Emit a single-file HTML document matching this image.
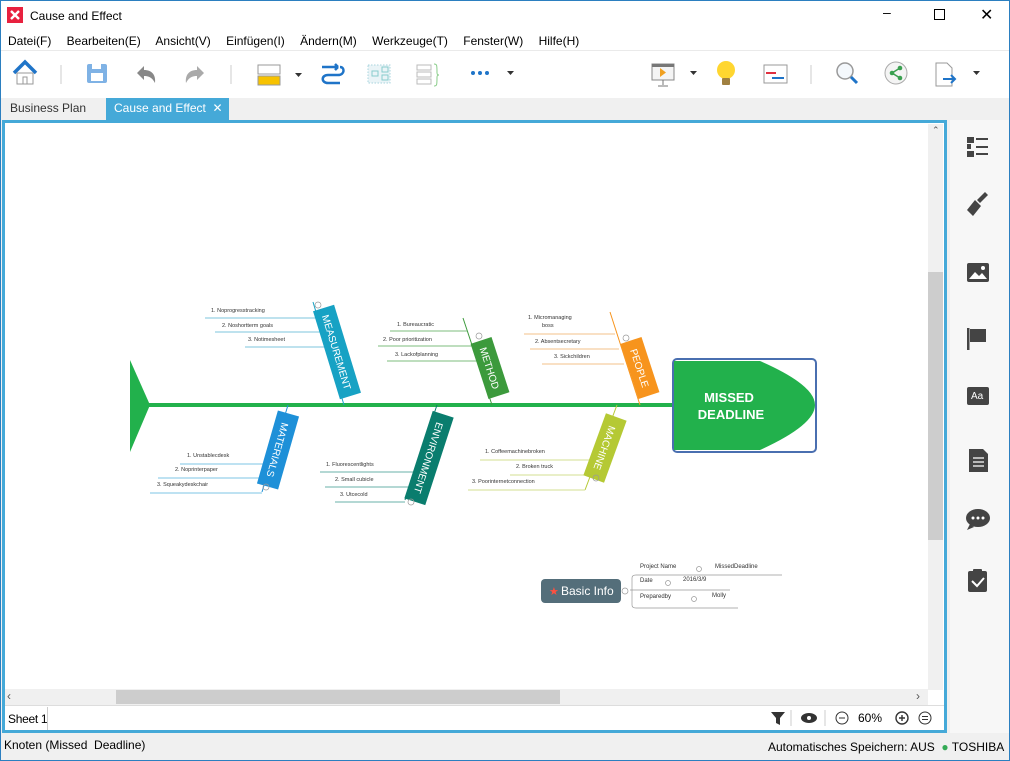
<!DOCTYPE html>
<html><head><meta charset="utf-8"><style>
*{margin:0;padding:0;box-sizing:border-box}
body{width:1010px;height:761px;overflow:hidden;background:#f0f0f0;font-family:"Liberation Sans",sans-serif;font-size:12px;color:#000;position:relative}
.a{position:absolute}
</style></head><body>
<div class="a" style="left:0;top:0;width:1010px;height:761px;border:1px solid #2b7fc0;pointer-events:none;z-index:9"></div>
<div class="a" style="left:0;top:0;width:1010px;height:32px;background:#fff"></div>
<svg class="a" style="left:7px;top:7px" width="16" height="16"><rect width="16" height="16" fill="#e8213f"/><path d="M4 4L12 12M12 4L4 12" stroke="#fff" stroke-width="2.4"/></svg>
<div class="a" style="left:30px;top:9px;font-size:12px">Cause and Effect</div>
<div class="a" style="left:883px;top:4px;font-size:14px">&#8211;</div>
<div class="a" style="left:934px;top:9px;width:11px;height:11px;border:1px solid #000"></div>
<div class="a" style="left:980px;top:5px;font-size:16px">&#10005;</div>
<div class="a" style="left:0;top:32px;width:1010px;height:18px;background:#fff"></div>
<div class="a" style="left:8px;top:34px;white-space:pre;word-spacing:0.5px">Datei(F)    Bearbeiten(E)    Ansicht(V)    Einfügen(I)    Ändern(M)    Werkzeuge(T)    Fenster(W)    Hilfe(H)</div>
<div class="a" style="left:0;top:50px;width:1010px;height:48px;background:#fff;border-top:1px solid #eaeaea"></div>
<svg class="a" style="left:0;top:55px" width="1010" height="40">
<path d="M14 18L25 7L36 18" stroke="#1f74c8" stroke-width="3.5" fill="none"/><rect x="17" y="18" width="16" height="11" fill="none" stroke="#999"/><rect x="23" y="22" width="4" height="7" fill="none" stroke="#999"/>
<line x1="61" y1="10" x2="61" y2="29" stroke="#ccc"/>
<rect x="87" y="9" width="20" height="19" rx="2" fill="#7fb2e5"/><rect x="91" y="18" width="12" height="8" fill="#fff"/><rect x="92" y="9" width="9" height="5" fill="#fff"/>
<path d="M137 18L144 11V15C152 15 156 20 155 28C152 22 148 21 144 21V25Z" fill="#888"/>
<path d="M204 18L197 11V15C189 15 185 20 186 28C189 22 193 21 197 21V25Z" fill="#aaa"/>
<line x1="231" y1="10" x2="231" y2="29" stroke="#ccc"/>
<rect x="258" y="10" width="22" height="9" fill="#fff" stroke="#999"/><rect x="258" y="21" width="22" height="9" fill="#f7c200" stroke="#999"/>
<path d="M295 18h7l-3.5 4z" fill="#333"/>
<path d="M322 12H338M338 12l-3-3M338 12l-3 3M340 12C345 12 345 20 338 20H328C321 20 321 28 328 28H340" stroke="#1f74c8" stroke-width="2.5" fill="none"/>
<rect x="368" y="10" width="22" height="18" fill="#eaf4f7" stroke="#a8d4de" stroke-dasharray="1.5"/><rect x="372" y="16" width="6" height="5" fill="none" stroke="#8cc"/><rect x="382" y="12" width="6" height="5" fill="none" stroke="#8cc"/><rect x="382" y="20" width="6" height="5" fill="none" stroke="#8cc"/>
<rect x="417" y="10" width="14" height="5" fill="none" stroke="#bbb"/><rect x="417" y="17" width="14" height="5" fill="none" stroke="#bbb"/><rect x="417" y="24" width="14" height="5" fill="none" stroke="#bbb"/><path d="M434 9c3 0 3 1 3 9 0 2 2 2 2 2 0 0-2 0-2 2 0 8 0 9-3 9" stroke="#8c8" fill="none"/>
<circle cx="473" cy="18" r="2" fill="#1f74c8"/><circle cx="480" cy="18" r="2" fill="#1f74c8"/><circle cx="487" cy="18" r="2" fill="#1f74c8"/>
<path d="M507 16h7l-3.5 4z" fill="#333"/>
<rect x="652" y="9" width="22" height="16" fill="#f4f4f4" stroke="#888"/><rect x="652" y="9" width="22" height="3" fill="#777"/><path d="M660 13l6 4.5-6 4.5z" fill="#f0a020"/><path d="M663 25v5M658 31h10" stroke="#777"/>
<path d="M690 16h7l-3.5 4z" fill="#333"/>
<circle cx="726" cy="15" r="9" fill="#ffd630"/><rect x="722" y="23" width="8" height="7" rx="1" fill="#a08040"/>
<rect x="764" y="10" width="23" height="18" fill="#fff" stroke="#999"/><path d="M766 18h10" stroke="#e03040" stroke-width="2"/><path d="M772 23h12" stroke="#1f74c8" stroke-width="2"/>
<line x1="811" y1="10" x2="811" y2="29" stroke="#ccc"/>
<circle cx="845" cy="16" r="8" fill="#f4f8fc" stroke="#999" stroke-width="1.5"/><path d="M851 22l6 6" stroke="#1f74c8" stroke-width="3"/>
<circle cx="896" cy="18" r="11" fill="#f4f4f4" stroke="#aaa"/><circle cx="900" cy="13" r="2.3" fill="#3aa050"/><circle cx="892" cy="18" r="2.3" fill="#3aa050"/><circle cx="900" cy="23" r="2.3" fill="#3aa050"/><path d="M900 13L892 18L900 23" stroke="#3aa050" stroke-width="1.5" fill="none"/>
<path d="M936 8h11l5 5v18h-16z" fill="#fff" stroke="#999"/><path d="M943 24h12M951 20l4 4-4 4" stroke="#1f74c8" stroke-width="2" fill="none"/>
<path d="M973 16h7l-3.5 4z" fill="#333"/>
</svg>
<div class="a" style="left:10px;top:101px;font-size:12px;color:#333">Business Plan</div>
<div class="a" style="left:106px;top:98px;width:123px;height:22px;background:#45a9d8;color:#fff;padding:3px 0 0 8px">Cause and Effect &nbsp;&#10005;</div>
<div class="a" style="left:950px;top:120px;width:60px;height:613px;background:#f7f7f7"></div>
<div class="a" style="left:2px;top:120px;width:945px;height:613px;border:3px solid #45a9d8;background:#fff"></div>
<div class="a" style="left:928px;top:124px;width:15px;height:566px;background:#f0f0f0"></div>
<div class="a" style="left:928px;top:272px;width:15px;height:268px;background:#cdcdcd"></div>
<div class="a" style="left:932px;top:125px;font-size:9px;color:#555">&#8963;</div>
<div class="a" style="left:5px;top:689px;width:923px;height:16px;background:#f0f0f0"></div>
<div class="a" style="left:116px;top:690px;width:444px;height:14px;background:#cdcdcd"></div>
<div class="a" style="left:7px;top:689px;color:#555">&#8249;</div>
<div class="a" style="left:916px;top:689px;color:#555">&#8250;</div>
<div class="a" style="left:5px;top:705px;width:939px;height:25px;background:#fff;border-top:1px solid #ddd"></div>
<div class="a" style="left:5px;top:707px;width:43px;height:23px;border-right:1px solid #ccc;padding:5px 0 0 3px;white-space:nowrap;font-size:12px;letter-spacing:-0.3px">Sheet 1</div>
<svg class="a" style="left:765px;top:709px" width="175" height="18"><path d="M6 3h14l-5 6v7l-4-2V9z" fill="#333"/><line x1="26" y1="1" x2="26" y2="17" stroke="#ccc"/><ellipse cx="44" cy="9" rx="8" ry="5" fill="#333"/><circle cx="44" cy="9" r="2" fill="#fff"/><line x1="60" y1="1" x2="60" y2="17" stroke="#ccc"/><circle cx="77" cy="9" r="6" fill="none" stroke="#333"/><path d="M74 9h6" stroke="#333"/><text x="93" y="13" font-size="12" font-family="Liberation Sans">60%</text><circle cx="137" cy="9" r="6" fill="none" stroke="#333" stroke-width="1.4"/><path d="M134 9h6M137 6v6" stroke="#333" stroke-width="1.4"/><circle cx="160" cy="9" r="6" fill="none" stroke="#333"/><path d="M157 7.5h6M157 10.5h6" stroke="#333"/></svg>
<div class="a" style="left:4px;top:738px">Knoten (Missed&nbsp; Deadline)</div>
<div class="a" style="left:768px;top:740px">Automatisches Speichern: AUS &nbsp;<span style="color:#3a5">&#9679;</span> TOSHIBA</div>
<svg class="a" style="left:950px;top:120px" width="60" height="480" fill="#444">
<rect x="17" y="17" width="7" height="6"/><rect x="17" y="31" width="7" height="6"/><path d="M26 19h12M26 27h12M26 34h12" stroke="#444" stroke-width="2"/><rect x="17" y="24" width="4" height="5"/>
<path d="M17 90l8-10 6 6-8 10zM27 80l8-8 3 3-8 8z"/>
<rect x="17" y="143" width="22" height="19" rx="2"/><path d="M19 159l6-7 4 4 3-3 5 6z" fill="#fff"/><circle cx="33" cy="148" r="2" fill="#fff"/>
<rect x="17" y="208" width="2.5" height="22"/><path d="M20 209h16v13H20z"/>
<rect x="17" y="267" width="22" height="18" rx="2"/><text x="21" y="279" font-size="10" fill="#fff" font-family="Liberation Sans">Aa</text>
<path d="M19 329h14l5 5v18H19z"/><path d="M23 338h11M23 342h11M23 346h11" stroke="#fff" stroke-width="1.3"/>
<ellipse cx="28" cy="398" rx="12" ry="9"/><path d="M20 404l-3 6 7-3z"/><circle cx="23" cy="398" r="1.5" fill="#fff"/><circle cx="28" cy="398" r="1.5" fill="#fff"/><circle cx="33" cy="398" r="1.5" fill="#fff"/>
<rect x="18" y="451" width="19" height="21" rx="2"/><rect x="23" y="449" width="9" height="4" rx="1"/><path d="M22 461l5 5 7-8" stroke="#fff" stroke-width="2" fill="none"/>
</svg>
<svg class="a" style="left:0;top:0" width="928" height="689" font-family="Liberation Sans" font-size="5.5" fill="#333">
<path d="M130 360L150 405L130 452Z" fill="#22b14c"/>
<line x1="148" y1="405" x2="675" y2="405" stroke="#22b14c" stroke-width="4"/>
<rect x="673" y="359" width="143" height="93" rx="4" fill="#fff" stroke="#4a6fb0" stroke-width="2"/>
<path d="M674 361H760Q815 385 815 405Q815 425 760 450H674Z" fill="#22b14c"/>
<text x="729" y="402" font-size="13" font-weight="bold" fill="#fff" text-anchor="middle">MISSED</text>
<text x="731" y="419" font-size="13" font-weight="bold" fill="#fff" text-anchor="middle">DEADLINE</text>
<g stroke-width="1" fill="none">
<line x1="313" y1="302" x2="344" y2="405" stroke="#17a2c4"/>
<line x1="205" y1="318" x2="318" y2="318" stroke="#7cc4dc"/><line x1="215" y1="332" x2="322" y2="332" stroke="#7cc4dc"/><line x1="245" y1="347" x2="326" y2="347" stroke="#7cc4dc"/>
<line x1="463" y1="318" x2="492" y2="405" stroke="#3c9a3c"/>
<line x1="390" y1="331" x2="467" y2="331" stroke="#7cbc7c"/><line x1="378" y1="346" x2="472" y2="346" stroke="#7cbc7c"/><line x1="387" y1="361" x2="477" y2="361" stroke="#7cbc7c"/>
<line x1="610" y1="312" x2="640" y2="405" stroke="#f7941d"/>
<line x1="524" y1="334" x2="615" y2="334" stroke="#f3c088"/><line x1="530" y1="349" x2="619" y2="349" stroke="#f3c088"/><line x1="542" y1="364" x2="624" y2="364" stroke="#f3c088"/>
<line x1="288" y1="405" x2="262" y2="492" stroke="#1e90d8"/>
<line x1="180" y1="464" x2="280" y2="464" stroke="#7cc4e4"/><line x1="158" y1="478" x2="276" y2="478" stroke="#7cc4e4"/><line x1="150" y1="493" x2="262" y2="493" stroke="#7cc4e4"/>
<line x1="437" y1="405" x2="405" y2="500" stroke="#0a7d6e"/>
<line x1="320" y1="472" x2="420" y2="472" stroke="#6ab0a8"/><line x1="325" y1="487" x2="414" y2="487" stroke="#6ab0a8"/><line x1="335" y1="502" x2="405" y2="502" stroke="#6ab0a8"/>
<line x1="617" y1="405" x2="585" y2="490" stroke="#b5c934"/>
<line x1="480" y1="460" x2="600" y2="460" stroke="#d3df90"/><line x1="510" y1="475" x2="595" y2="475" stroke="#d3df90"/><line x1="468" y1="490" x2="585" y2="490" stroke="#d3df90"/>
</g>
<g transform="translate(337,352) rotate(73)"><rect x="-46" y="-11" width="92" height="22" fill="#17a2c4"/><text x="0" y="4" font-size="10" fill="#fff" text-anchor="middle">MEASUREMENT</text></g>
<g transform="translate(490,368) rotate(72)"><rect x="-29" y="-11" width="58" height="22" fill="#3c9a3c"/><text x="0" y="4" font-size="10" fill="#fff" text-anchor="middle">METHOD</text></g>
<g transform="translate(640,368) rotate(72)"><rect x="-29" y="-11" width="58" height="22" fill="#f7941d"/><text x="0" y="4" font-size="10" fill="#fff" text-anchor="middle">PEOPLE</text></g>
<g transform="translate(278,450) rotate(106)"><rect x="-38" y="-11" width="76" height="22" fill="#1e90d8"/><text x="0" y="4" font-size="10" fill="#fff" text-anchor="middle">MATERIALS</text></g>
<g transform="translate(429,458) rotate(108)"><rect x="-46" y="-11" width="92" height="22" fill="#0a7d6e"/><text x="0" y="4" font-size="10" fill="#fff" text-anchor="middle">ENVIRONMENT</text></g>
<g transform="translate(605,448) rotate(110)"><rect x="-33" y="-11" width="66" height="22" fill="#b5c934"/><text x="0" y="4" font-size="10" fill="#fff" text-anchor="middle">MACHINE</text></g>
<text x="211" y="312">1.    Noprogresstracking</text><text x="222" y="327">2.    Noshortterm goals</text><text x="248" y="341">3.    Notimesheet</text>
<text x="397" y="326">1.    Bureaucratic</text><text x="383" y="341">2.  Poor prioritization</text><text x="395" y="356">3.  Lackofplanning</text>
<text x="528" y="319">1.   Micromanaging</text><text x="542" y="327">boss</text><text x="535" y="343">2.  Absentsecretary</text><text x="554" y="358">3.   Sickchildren</text>
<text x="187" y="457">1.    Unstablecdesk</text><text x="175" y="471">2.  Noprinterpaper</text><text x="157" y="486">3.  Squeakydeskchair</text>
<text x="326" y="466">1.   Fluorescentlights</text><text x="335" y="481">2.  Small cubicle</text><text x="340" y="496">3.   Utcecold</text>
<text x="485" y="453">1.   Coffeemachinebroken</text><text x="516" y="468">2.    Broken truck</text><text x="472" y="483">3.  Poorinternetconnection</text>
<g fill="none" stroke="#999" stroke-width="0.7"><circle cx="318" cy="305" r="3"/><circle cx="479" cy="336" r="3"/><circle cx="626" cy="338" r="3"/><circle cx="266" cy="487" r="3"/><circle cx="411" cy="502" r="3"/><circle cx="596" cy="478" r="3"/></g>
<rect x="541" y="579" width="80" height="24" rx="4" fill="#546e7a"/>
<text x="549" y="595" font-size="11" fill="#ff5040">&#9733;</text><text x="561" y="595" font-size="12" fill="#fff">Basic Info</text>
<g stroke="#999" stroke-width="0.7" fill="none"><path d="M632 590V578Q632 575 636 575H782M632 590V605Q632 608 636 608H738M630 590H730"/><circle cx="625" cy="591" r="3"/><circle cx="699" cy="569" r="2.5"/><circle cx="668" cy="583" r="2.5"/><circle cx="694" cy="599" r="2.5"/></g>
<text x="640" y="568" font-size="6">Project Name</text><text x="715" y="568" font-size="6">MissedDeadline</text>
<text x="640" y="582" font-size="6">Date</text><text x="683" y="581" font-size="6">2016/3/9</text>
<text x="640" y="598" font-size="6">Preparedby</text><text x="712" y="597" font-size="6">Molly</text>
</svg>
</body></html>
